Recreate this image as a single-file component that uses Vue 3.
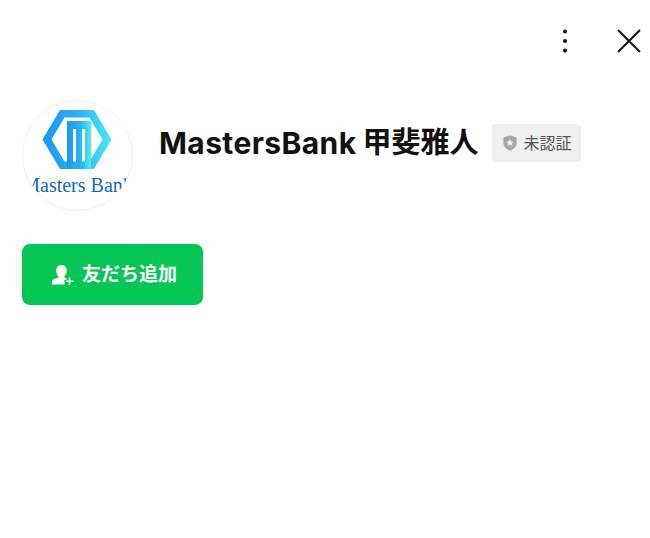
<script setup>
const latinName = 'MastersBank'
const kanjiName = '甲斐雅人'
</script>

<template>
  <div class="page">
    <header class="topbar">
      <button class="icon-btn more" aria-label="more">
        <svg width="6" height="26" viewBox="0 0 6 26">
          <circle cx="3" cy="3.500" r="2" />
          <circle cx="3" cy="13" r="2" />
          <circle cx="3" cy="22.500" r="2" />
        </svg>
      </button>
      <button class="icon-btn close" aria-label="close">
        <svg width="24" height="24" viewBox="0 0 24 24">
          <path d="M1 1L23 23M23 1L1 23" />
        </svg>
      </button>
    </header>

    <section class="profile">
      <div class="avatar">
        <svg class="logo" width="70" height="60" viewBox="0 0 70 60">
          <defs>
            <linearGradient id="hex" x1="0" y1="0" x2="1" y2="0">
              <stop offset="0" stop-color="#1a97f6" />
              <stop offset="0.55" stop-color="#2ab4f5" />
              <stop offset="1" stop-color="#4eecf0" />
            </linearGradient>
          </defs>
          <path
            fill="url(#hex)"
            fill-rule="evenodd"
            d="M18 0H52L69.500 29.500L52 59H18L0.500 29.500ZM22.500 7.500L9.500 29.500L22.500 51.500H47.500L60.500 29.500L47.500 7.500Z"
          />
          <path
            fill="url(#hex)"
            d="M25 11H49V59H43V19H40V59H34V19H31V59H25Z"
          />
        </svg>
        <span class="logo-text">Masters Bank</span>
      </div>

      <div class="title-row">
        <h1 class="name">
          <span class="latin">{{ latinName }}</span>
          <span class="kanji">{{ kanjiName }}</span>
        </h1>
        <span class="badge">
          <svg width="14" height="16" viewBox="0 0 16 18">
            <path class="shield" d="M8 0.500L15.500 2.500V9C15.500 13 12.500 16 8 17.500C3.500 16 0.500 13 0.500 9V2.500Z" />
            <path class="star" d="M8 4.500L9.300 7.300L12.200 7.600L10 9.600L10.700 12.500L8 11L5.300 12.500L6 9.600L3.800 7.600L6.700 7.300Z" />
          </svg>
          <span class="badge-text">未認証</span>
        </span>
      </div>
    </section>

    <button class="add-btn">
      <svg width="22" height="20" viewBox="0 0 22 20">
        <path class="person" d="M9.500 0C13 0 14.800 2.500 14.800 5.500C14.800 8 13.800 10 12.300 11.300V12.300C13 12.800 13.600 13 14.500 13.400V15H12.500V19.500H0V17C0 15.300 1 14.500 3 13.800C4.500 13.300 6 12.800 6.500 12.300V11.200C5 10 4.200 8 4.200 5.500C4.200 2.500 6 0 9.500 0Z" />
        <path class="plus" d="M17.500 12.500V20M14 16.300H21.500" />
      </svg>
      <span class="add-text">友だち追加</span>
    </button>
  </div>
</template>

<style>
html,
body {
  margin: 0;
  background: #fff;
}
</style>

<style scoped>
.page {
  width: 650px;
  height: 538px;
  box-sizing: border-box;
  padding: 28px 9px 0 22px;
  font-family: Inter, "Noto Sans CJK JP", sans-serif;
  overflow: hidden;
}

.topbar {
  display: flex;
  justify-content: flex-end;
  align-items: center;
  gap: 49px;
  height: 26px;
}

.icon-btn {
  padding: 0;
  border: 0;
  background: none;
  display: flex;
}

.more svg {
  fill: #111;
}

.close svg {
  stroke: #111;
  stroke-width: 2;
  fill: none;
}

.profile {
  display: flex;
  align-items: flex-start;
  gap: 26px;
  margin-top: 46px;
}

.avatar {
  width: 111px;
  height: 111px;
  flex: none;
  box-sizing: border-box;
  border: 1px solid #f2f2f2;
  border-radius: 50%;
  overflow: hidden;
  display: flex;
  flex-direction: column;
  align-items: center;
  padding-top: 9px;
}

.logo {
  flex: none;
  margin-left: -2px;
}

.logo-text {
  margin-top: 3px;
  font-family: "Liberation Serif", serif;
  font-size: 20px;
  line-height: 24px;
  color: #1565c8;
  white-space: nowrap;
}

.title-row {
  display: flex;
  align-items: center;
  gap: 13px;
  margin-top: 24px;
}

.name {
  display: flex;
  gap: 6px;
  margin: 0;
  font-size: 30px;
  line-height: 38px;
  font-weight: 700;
  color: #111;
  white-space: nowrap;
}

.latin {
  letter-spacing: 0.4px;
}

.kanji {
  font-size: 29px;
}

.badge {
  display: flex;
  align-items: center;
  gap: 7px;
  height: 38px;
  padding: 0 9px 0 11px;
  border-radius: 4px;
  background: #efefef;
  color: #555;
  font-size: 16px;
}

.badge-text {
  padding-bottom: 2px;
}

.shield {
  fill: #a4a6a8;
}

.star {
  fill: #efefef;
}

.add-btn {
  display: flex;
  align-items: center;
  justify-content: center;
  gap: 8px;
  width: 181px;
  height: 61px;
  margin-top: 33px;
  padding: 0 0 0 4px;
  border: 0;
  border-radius: 8px;
  background: #06c755;
  color: #fff;
  font-family: inherit;
  font-size: 19px;
  font-weight: 700;
}

.add-text {
  padding-bottom: 4px;
}

.person {
  fill: #fff;
}

.plus {
  stroke: #fff;
  stroke-width: 1.500;
  fill: none;
}
</style>
